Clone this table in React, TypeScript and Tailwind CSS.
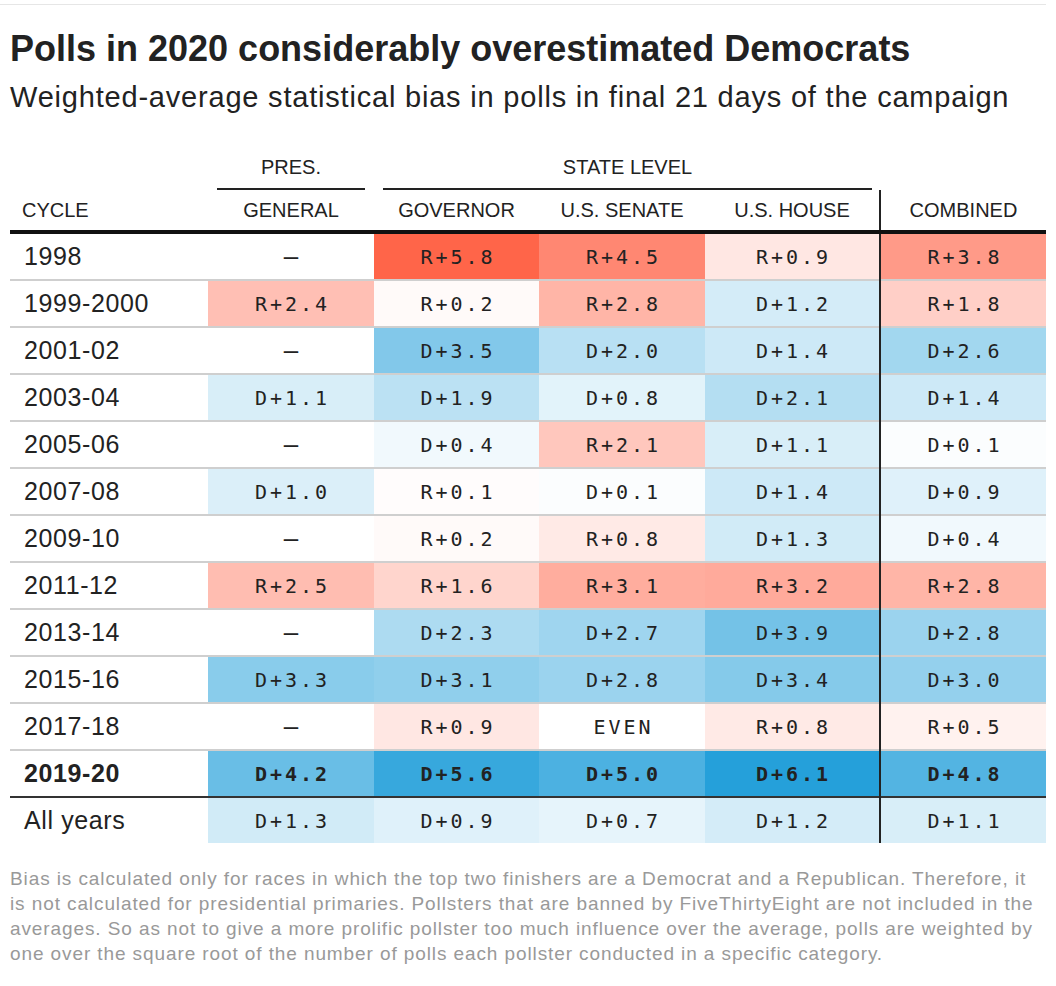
import React from "react";

type V = number | null;

const rows: { label: string; bold?: boolean; vals: V[] }[] = [
  { label: "1998", vals: [null, 5.8, 4.5, 0.9, 3.8] },
  { label: "1999-2000", vals: [2.4, 0.2, 2.8, -1.2, 1.8] },
  { label: "2001-02", vals: [null, -3.5, -2.0, -1.4, -2.6] },
  { label: "2003-04", vals: [-1.1, -1.9, -0.8, -2.1, -1.4] },
  { label: "2005-06", vals: [null, -0.4, 2.1, -1.1, -0.1] },
  { label: "2007-08", vals: [-1.0, 0.1, -0.1, -1.4, -0.9] },
  { label: "2009-10", vals: [null, 0.2, 0.8, -1.3, -0.4] },
  { label: "2011-12", vals: [2.5, 1.6, 3.1, 3.2, 2.8] },
  { label: "2013-14", vals: [null, -2.3, -2.7, -3.9, -2.8] },
  { label: "2015-16", vals: [-3.3, -3.1, -2.8, -3.4, -3.0] },
  { label: "2017-18", vals: [null, 0.9, 0, 0.8, 0.5] },
  { label: "2019-20", bold: true, vals: [-4.2, -5.6, -5.0, -6.1, -4.8] },
  { label: "All years", vals: [-1.3, -0.9, -0.7, -1.2, -1.1] },
];

function bg(v: V): string {
  if (v === null || v === 0) return "transparent";
  const t = Math.min(Math.abs(v) / 6.1, 1);
  const end = v > 0 ? [255, 93, 64] : [37, 160, 218];
  const c = end.map((e) => Math.round(255 + (e - 255) * t));
  return `rgb(${c.join(",")})`;
}

function fmt(v: V): string {
  if (v === 0) return "EVEN";
  if (v === null) return "";
  return (v > 0 ? "R+" : "D+") + Math.abs(v).toFixed(1);
}

const widths = ["w-[166px]", "w-[165px]", "w-[166px]", "w-[174px]"];

function DataCell({ v, w, bold, border }: { v: V; w: string; bold?: boolean; border: string }) {
  if (v === null) {
    return (
      <div className={`${w} ${border} flex items-center justify-center font-['Liberation_Sans',Arial,sans-serif] text-[26px] text-[#222]`}>
        –
      </div>
    );
  }
  return (
    <div
      className={`${w} ${border} flex items-center justify-center pl-[3px] font-['DejaVu_Sans_Mono',monospace] text-[20px] tracking-[3px] text-[#222] ${bold ? "font-bold" : "font-normal"}`}
      style={{ backgroundColor: bg(v) }}
    >
      {fmt(v)}
    </div>
  );
}

export default function App() {
  return (
    <div className="w-[1056px] bg-white font-['Liberation_Sans',Arial,sans-serif] text-[#222]">
      <div className="pt-[4px]">
        <div className="h-px bg-[#e6e6e6] w-[1046px]" />
      </div>
      <div className="pl-[10px]">
        <h1 className="mt-[24px] h-[40px] text-[36px] leading-[40px] font-bold whitespace-nowrap">
          Polls in 2020 considerably overestimated Democrats
        </h1>
        <p className="mt-[11px] h-[34px] text-[29px] leading-[34px] tracking-[0.8px] whitespace-nowrap">
          Weighted-average statistical bias in polls in final 21 days of the campaign
        </p>

        <div className="mt-[34px] w-[1036px]">
          {/* group header */}
          <div className="flex h-[42px] text-[20px] uppercase">
            <div className="w-[198px]" />
            <div className="w-[166px] pl-[9px] pr-[9px]">
              <div className="h-[42px] pb-[2px] border-b-2 border-[#222] flex items-center justify-center">PRES.</div>
            </div>
            <div className="w-[505px] pl-[9px] pr-[7px]">
              <div className="h-[42px] pb-[2px] border-b-2 border-[#222] flex items-center justify-center">STATE LEVEL</div>
            </div>
          </div>
          {/* column header */}
          <div className="flex h-[40px] text-[20px] uppercase">
            <div className="w-[198px] flex items-center pl-[12px]">CYCLE</div>
            <div className="w-[166px] flex items-center justify-center">GENERAL</div>
            <div className="w-[165px] flex items-center justify-center">GOVERNOR</div>
            <div className="w-[166px] flex items-center justify-center">U.S. SENATE</div>
            <div className="w-[174px] flex items-center justify-center">U.S. HOUSE</div>
            <div className="w-[2px] bg-[#222]" />
            <div className="w-[165px] flex items-center justify-center">COMBINED</div>
          </div>
          <div className="h-[4px] bg-[#111]" />
          {rows.map((r, i) => {
            const last = i === rows.length - 1;
            const border = last
              ? "h-[45px]"
              : r.bold
              ? "h-[47px] border-b-2 border-[#333]"
              : "h-[47px] border-b-2 border-[#cfcfcf]";
            return (
              <div key={r.label} className="flex">
                <div
                  className={`w-[198px] ${border} flex items-center pl-[14px] text-[25px] tracking-[0.6px] ${r.bold ? "font-bold" : "font-normal"}`}
                >
                  {r.label}
                </div>
                {r.vals.slice(0, 4).map((v, j) => (
                  <DataCell key={j} v={v} w={widths[j]} bold={r.bold} border={border} />
                ))}
                <div className="w-[2px] bg-[#222]" />
                <DataCell v={r.vals[4]} w="w-[165px]" bold={r.bold} border={border} />
              </div>
            );
          })}
        </div>

        <div className="mt-[23px] text-[19px] leading-[25px] tracking-[0.9px] text-[#999] whitespace-nowrap">
          <div>Bias is calculated only for races in which the top two finishers are a Democrat and a Republican. Therefore, it</div>
          <div>is not calculated for presidential primaries. Pollsters that are banned by FiveThirtyEight are not included in the</div>
          <div>averages. So as not to give a more prolific pollster too much influence over the average, polls are weighted by</div>
          <div>one over the square root of the number of polls each pollster conducted in a specific category.</div>
        </div>
      </div>
    </div>
  );
}
